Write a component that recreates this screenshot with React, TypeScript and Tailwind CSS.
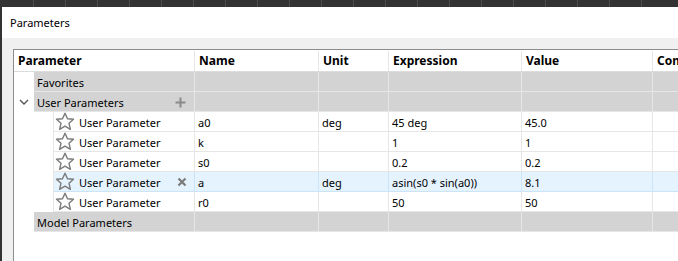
import React from "react";

type Row = { name: string; unit: string; expr: string; value: string; active?: boolean };

const rows: Row[] = [
  { name: "a0", unit: "deg", expr: "45 deg", value: "45.0" },
  { name: "k", unit: "", expr: "1", value: "1" },
  { name: "s0", unit: "", expr: "0.2", value: "0.2" },
  { name: "a", unit: "deg", expr: "asin(s0 * sin(a0))", value: "8.1", active: true },
  { name: "r0", unit: "", expr: "50", value: "50" },
];

function Star() {
  return (
    <svg width="20" height="19" viewBox="0 0 20 19" fill="none">
      <path
        d="M10 1.2 L12.5 6.7 L18.5 7.3 L14 11.3 L15.4 17.3 L10 14.1 L4.6 17.3 L6 11.3 L1.5 7.3 L7.5 6.7 Z"
        stroke="#7a7a7a"
        strokeWidth="1.4"
        strokeLinejoin="round"
      />
    </svg>
  );
}

function GroupRow({ label, chevron, plus }: { label: string; chevron?: boolean; plus?: boolean }) {
  return (
    <div className="flex h-[20px]">
      <div className="flex w-[20px] shrink-0 items-center justify-center bg-white">
        {chevron && (
          <svg width="10" height="6" viewBox="0 0 10 6">
            <path d="M1 1 L5 5 L9 1" stroke="#555" strokeWidth="1.4" fill="none" />
          </svg>
        )}
      </div>
      <div className="flex w-[161px] shrink-0 items-center justify-between border-b border-r border-[#e6e6e6] bg-[#d3d3d3] pt-[1px] pl-[3px] pr-[8px]">
        <span>{label}</span>
        {plus && (
          <svg width="11" height="11" viewBox="0 0 11 11">
            <path d="M5.5 0.5 V10.5 M0.5 5.5 H10.5" stroke="#8a8a8a" strokeWidth="2" />
          </svg>
        )}
      </div>
      <div className="w-[124px] shrink-0 border-b border-r border-[#e6e6e6] bg-[#d3d3d3]" />
      <div className="w-[70px] shrink-0 border-b border-r border-[#e6e6e6] bg-[#d3d3d3]" />
      <div className="w-[133px] shrink-0 border-b border-r border-[#e6e6e6] bg-[#d3d3d3]" />
      <div className="w-[131px] shrink-0 border-b border-r border-[#e6e6e6] bg-[#d3d3d3]" />
      <div className="flex-1 border-b border-[#e6e6e6] bg-[#d3d3d3]" />
    </div>
  );
}

function ParamRow({ row }: { row: Row }) {
  const bg = row.active ? "bg-[#e5f3ff]" : "bg-white";
  const line = row.active ? "border-[#cce4f7]" : "border-[#e6e6e6]";
  return (
    <div className="flex h-[20px]">
      <div className="w-[40px] shrink-0 border-r border-[#e6e6e6] bg-white" />
      <div className={`flex w-[141px] shrink-0 items-center border-b border-r ${line} ${bg} pl-[1px] pr-[7px]`}>
        <Star />
        <span className="ml-[4px] flex-1 pt-[1px]">User Parameter</span>
        {row.active && (
          <svg width="10" height="10" viewBox="0 0 10 10">
            <path d="M1.5 1.5 L8.5 8.5 M8.5 1.5 L1.5 8.5" stroke="#7a7a7a" strokeWidth="2.2" />
          </svg>
        )}
      </div>
      <div className={`flex w-[124px] shrink-0 items-center border-b border-r ${line} ${bg} pt-[1px] pl-[3px]`}>{row.name}</div>
      <div className={`flex w-[70px] shrink-0 items-center border-b border-r ${line} ${bg} pt-[1px] pl-[3px]`}>{row.unit}</div>
      <div className={`flex w-[133px] shrink-0 items-center border-b border-r ${line} ${bg} pt-[1px] pl-[3px]`}>{row.expr}</div>
      <div className={`flex w-[131px] shrink-0 items-center border-b border-r ${line} ${bg} pt-[1px] pl-[3px]`}>{row.value}</div>
      <div className={`flex-1 border-b ${line} ${bg}`} />
    </div>
  );
}

export default function App() {
  const headers: [string, string][] = [
    ["Parameter", "w-[181px]"],
    ["Name", "w-[124px]"],
    ["Unit", "w-[70px]"],
    ["Expression", "w-[133px]"],
    ["Value", "w-[131px]"],
  ];

  return (
    <div
      className="flex h-[261px] w-[678px] flex-col overflow-hidden bg-[#333] text-[11px] text-black"
      style={{ fontFamily: '"Noto Sans", "Open Sans", sans-serif' }}
    >
      <div className="flex h-[7px] shrink-0 gap-[31px] pl-[33px]">
        {Array.from({ length: 20 }).map((_, i) => (
          <div key={i} className="h-full w-px bg-[#4e4e4e]" />
        ))}
      </div>
      <div className="ml-[2px] flex flex-1 flex-col bg-[#f0f0f0]">
        <div className="flex h-[31px] shrink-0 items-center bg-white pl-[8px] pt-[2px] text-[11px]">Parameters</div>
        <div className="h-[11px] shrink-0" />
        <div className="ml-[11px] flex flex-1 flex-col border-l border-t border-[#8c8c8c] bg-white leading-none">
          <div className="flex h-[22px] shrink-0 border-b border-[#dcdcdc] pt-[1px] text-[12px] font-bold">
            {headers.map(([h, w]) => (
              <div key={h} className={`${w} flex shrink-0 items-center border-r border-[#e6e6e6] pl-[4px]`}>
                {h}
              </div>
            ))}
            <div className="flex flex-1 items-center overflow-hidden whitespace-nowrap pl-[4px]">Comment</div>
          </div>
          <GroupRow label="Favorites" />
          <GroupRow label="User Parameters" chevron plus />
          {rows.map((r) => (
            <ParamRow key={r.name} row={r} />
          ))}
          <GroupRow label="Model Parameters" />
        </div>
      </div>
    </div>
  );
}
